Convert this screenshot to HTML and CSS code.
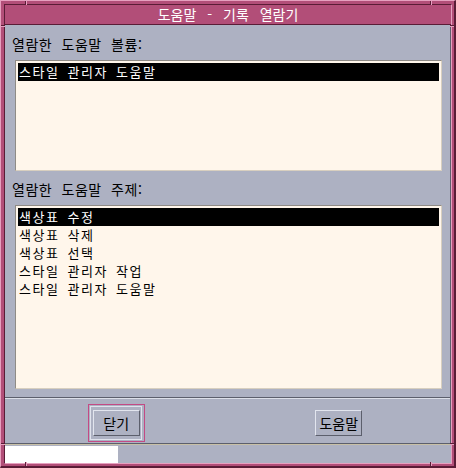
FILE: index.html
```html
<!doctype html>
<html lang="ko">
<head>
    <meta charset="UTF-8">
    <title>도움말 - 기록 열람기</title>
    <link rel="stylesheet" href="styles.css">
</head>
<body>
    <div class="window">
        <span class="tick tick-top tick-l"></span>
        <span class="tick tick-top tick-r"></span>
        <span class="tick tick-bottom tick-l"></span>
        <span class="tick tick-bottom tick-r"></span>
        <span class="tick tick-side tick-left tick-t"></span>
        <span class="tick tick-side tick-left tick-b"></span>
        <span class="tick tick-side tick-right tick-t"></span>
        <span class="tick tick-side tick-right tick-b"></span>

        <div class="inner">
            <div class="titlebar">도움말 - 기록 열람기</div>

            <div class="panel">
                <div class="label">열람한 도움말 볼륨:</div>
                <ul class="list list-volumes">
                    <li class="selected">스타일 관리자 도움말</li>
                </ul>

                <div class="label label-topics">열람한 도움말 주제:</div>
                <ul class="list list-topics">
                    <li class="selected">색상표 수정</li>
                    <li>색상표 삭제</li>
                    <li>색상표 선택</li>
                    <li>스타일 관리자 작업</li>
                    <li>스타일 관리자 도움말</li>
                </ul>

                <div class="actions">
                    <div class="action-cell">
                        <div class="focus-ring">
                            <div class="default-frame">
                                <button class="btn">닫기</button>
                            </div>
                        </div>
                    </div>
                    <div class="action-cell">
                        <button class="btn">도움말</button>
                    </div>
                </div>
            </div>

            <div class="status">
                <div class="status-field"></div>
            </div>
        </div>
    </div>
</body>
</html>
```

FILE: styles.css
```css
* {
    box-sizing: border-box;
}
body {
    margin: 0;
    font-family: "Noto Sans CJK KR", "DejaVu Sans", sans-serif;
    font-size: 14px;
    background-color: #5a1c36;
}
.window {
    position: relative;
    width: 456px;
    height: 468px;
    background-color: #b24e78;
    border-style: solid;
    border-width: 1px 2px 2px 1px;
    border-color: #e6a0bf #5a1c36 #5a1c36 #e6a0bf;
    padding: 3px 2px 2px 3px;
}
.inner {
    display: flex;
    flex-direction: column;
    height: 100%;
    border-style: solid;
    border-width: 1px;
    border-color: #5a1c36 #e6a0bf #e6a0bf #5a1c36;
}

/* resize corner marks on the frame */
.tick {
    position: absolute;
    background-color: #e6a0bf;
}
.tick-top, .tick-bottom {
    width: 2px;
    height: 4px;
    border-left: 1px solid #5a1c36;
}
.tick-top { top: 0; }
.tick-bottom { bottom: 0; }
.tick-l { left: 24px; }
.tick-r { left: 429px; }
.tick-side {
    width: 4px;
    height: 2px;
    border-top: 1px solid #5a1c36;
}
.tick-left { left: 0; }
.tick-right { right: 0; }
.tick-t { top: 24px; }
.tick-b { top: 442px; }

.titlebar {
    height: 20px;
    line-height: 19px;
    border-bottom: 1px solid #5a1c36;
    color: #ffffff;
    text-align: center;
    word-spacing: 7px;
    background-color: #b24e78;
}
.panel {
    display: flex;
    flex-direction: column;
    height: 419px;
    background-color: #adb1c2;
    border-right: 1px solid #5c5f6c;
    border-bottom: 1px solid #5c5f6c;
    padding-top: 10px;
}
.label {
    height: 18px;
    line-height: 18px;
    margin-left: 7px;
    color: #000000;
    letter-spacing: 0.5px;
    word-spacing: 5px;
}
.label-topics {
    margin-top: 9px;
}
.list {
    list-style: none;
    margin: 7px 8px 0 10px;
    padding: 2px;
    background-color: #fff6eb;
    border: 1px solid;
    border-color: #8f8b86 #d8cfbf #d8cfbf #8f8b86;
}
.list-volumes {
    height: 111px;
}
.list-topics {
    height: 184px;
}
.list li {
    height: 18px;
    line-height: 18px;
    padding-left: 1px;
    font-size: 13px;
    color: #000000;
    letter-spacing: 1.5px;
    word-spacing: 3px;
    white-space: nowrap;
}
.list li.selected {
    background-color: #000000;
    color: #ffffff;
}
.actions {
    display: flex;
    margin-top: 8px;
    flex: 1;
    border-top: 1px solid #5c5f6c;
    box-shadow: inset 0 1px 0 #dcdfe8;
    padding-top: 5px;
}
.action-cell {
    flex: 1;
    display: flex;
    justify-content: center;
    align-items: center;
    padding-bottom: 1px;
}
.focus-ring {
    border: 1px solid #c44a84;
    padding: 1px 2px 1px 1px;
}
.default-frame {
    border: 1px solid #dfe2ec;
    padding: 3px 1px 3px 2px;
}
.btn {
    display: block;
    width: 47px;
    height: 26px;
    padding: 0;
    font-family: "Noto Sans CJK KR", "DejaVu Sans", sans-serif;
    font-size: 14px;
    color: #000000;
    background-color: #adb1c2;
    border: 1px solid;
    border-color: #e2e5ee #5c5f6c #5c5f6c #e2e5ee;
}
.status {
    height: 19px;
    background-color: #adb1c2;
    border-top: 1px solid #c8c0a6;
    padding-top: 1px;
}
.status-field {
    width: 113px;
    height: 17px;
    background-color: #ffffff;
}
```
